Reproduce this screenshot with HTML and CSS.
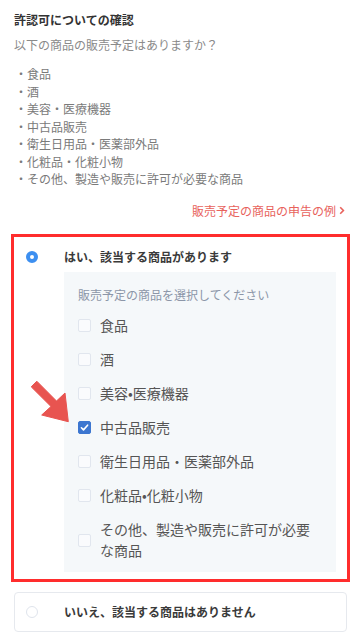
FILE: index.html
```html
<!DOCTYPE html>
<html lang="ja">
<head>
  <meta charset="UTF-8">
  <meta name="viewport" content="width=device-width, initial-scale=1">
  <title>許認可についての確認</title>
  <link rel="stylesheet" href="styles.css">
</head>
<body>
  <div class="page">
    <h1 class="title">許認可についての確認</h1>
    <p class="lead">以下の商品の販売予定はありますか？</p>

    <ul class="goods">
      <li>・食品</li>
      <li>・酒</li>
      <li>・美容・医療機器</li>
      <li>・中古品販売</li>
      <li>・衛生日用品・医薬部外品</li>
      <li>・化粧品・化粧小物</li>
      <li>・その他、製造や販売に許可が必要な商品</li>
    </ul>

    <div class="example-link">
      <a href="#">販売予定の商品の申告の例</a>
      <svg class="chev" width="6" height="9" viewBox="0 0 6 9"><path d="M1.2 1.2 L4.4 4.5 L1.2 7.8" fill="none" stroke="#e8625c" stroke-width="1.6"/></svg>
    </div>

    <div class="option option-yes">
      <div class="option-head">
        <span class="radio radio-on"></span>
        <span class="option-label">はい、該当する商品があります</span>
      </div>
      <div class="picker">
        <div class="picker-title">販売予定の商品を選択してください</div>
        <label class="check-row"><span class="box"></span><span>食品</span></label>
        <label class="check-row"><span class="box"></span><span>酒</span></label>
        <label class="check-row"><span class="box"></span><span>美容•医療機器</span></label>
        <label class="check-row"><span class="box box-on"><svg width="13" height="13" viewBox="0 0 13 13"><path d="M3.4 6.8 L5.5 8.9 L9.6 4.2" fill="none" stroke="#fff" stroke-width="1.6" stroke-linecap="round" stroke-linejoin="round"/></svg></span><span>中古品販売</span></label>
        <label class="check-row"><span class="box"></span><span>衛生日用品・医薬部外品</span></label>
        <label class="check-row"><span class="box"></span><span>化粧品•化粧小物</span></label>
        <label class="check-row"><span class="box"></span><span>その他、製造や販売に許可が必要な商品</span></label>
      </div>
    </div>

    <div class="option option-no">
      <div class="option-head">
        <span class="radio"></span>
        <span class="option-label">いいえ、該当する商品はありません</span>
      </div>
    </div>

    <svg class="pointer" width="46" height="50" viewBox="26 376 46 50">
      <polygon points="36.8,381.2 56.5,401 65,393 68.3,421.7 41.7,415 51,406.5 31.2,386.8" fill="#e85450" stroke="#e85450" stroke-width="1" stroke-linejoin="round"/>
    </svg>
  </div>
</body>
</html>
```

FILE: styles.css
```css
* {
  box-sizing: border-box;
}

body {
  margin: 0;
  background: #ffffff;
  font-family: "Noto Sans CJK JP", "Noto Sans", sans-serif;
  color: #555;
}

.page {
  position: relative;
  padding: 11px 14px 20px;
}

.title {
  margin: 0;
  font-size: 12px;
  line-height: 18px;
  font-weight: 700;
  color: #333;
}

.lead {
  margin: 7px 0 0;
  font-size: 12px;
  line-height: 18px;
  color: #8a8a8a;
}

.goods {
  list-style: none;
  margin: 11px 0 0;
  padding: 0;
  font-size: 12px;
  line-height: 17.5px;
  color: #7a7a7a;
}

.goods li {
  margin-left: 1px;
}

.example-link {
  margin-top: 14px;
  display: flex;
  justify-content: flex-end;
  align-items: center;
  gap: 3px;
  padding-right: 2px;
  line-height: 18px;
}

.example-link a {
  font-size: 12px;
  color: #e8625c;
  text-decoration: none;
}

.option {
  background: #fff;
  border-radius: 4px;
}

.option-yes {
  margin: 14px -3px 0;
  border: 3px solid #ff2d2d;
  border-radius: 0;
  padding: 11px 11px 7px 12px;
}

.option-no {
  margin-top: 10px;
  border: 1px solid #e6e9ee;
  padding: 10px 11px 10px 11px;
  height: 40px;
}

.option-head {
  display: flex;
  align-items: center;
  height: 18px;
}

.radio {
  width: 12px;
  height: 12px;
  border-radius: 50%;
  border: 1px solid #dfe4ec;
  background: #fff;
  flex: none;
}

.radio-on {
  border: 4px solid #3d8ff0;
}

.option-label {
  margin-left: 26px;
  font-size: 12px;
  font-weight: 700;
  color: #3a3a3a;
}

.picker {
  margin: 6px 0 0 38px;
  background: #f5f8fa;
  padding: 14px 14px 4px;
}

.picker-title {
  font-size: 12px;
  line-height: 18px;
  color: #8c96a8;
  margin-bottom: 5px;
}

.check-row {
  display: flex;
  align-items: center;
  gap: 9px;
  padding: 6.5px 0;
  font-size: 14px;
  line-height: 21px;
  color: #555;
}

.box {
  width: 13px;
  height: 13px;
  flex: none;
  border: 1px solid #e1e6ee;
  border-radius: 2px;
  background: #fafbfd;
  display: flex;
}

.box-on {
  border-color: #3c76d0;
  background: #3c76d0;
}

.box-on svg {
  margin: -1px;
}

.pointer {
  position: absolute;
  left: 26px;
  top: 376px;
}
```
